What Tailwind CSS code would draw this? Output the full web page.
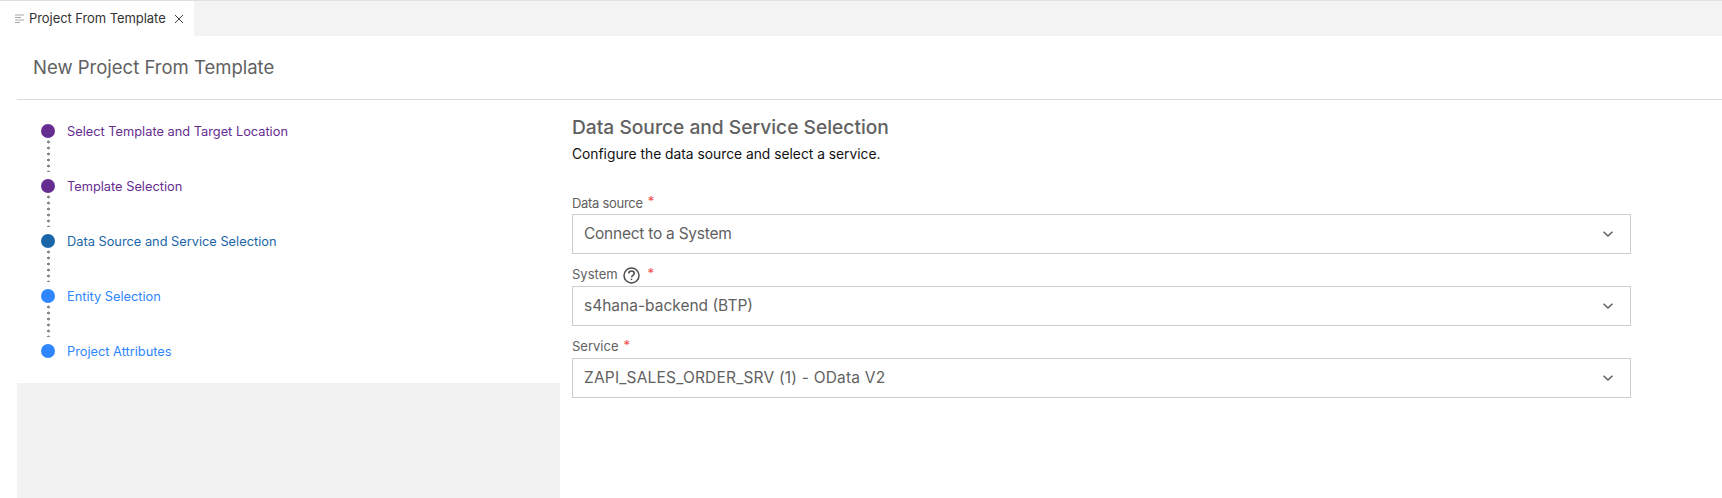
<!DOCTYPE html>
<html lang="en">
<head>
    <meta charset="UTF-8">
    <meta name="viewport" content="width=device-width, initial-scale=1.0">
    <title>Project From Template</title>
    <script src="https://cdn.jsdelivr.net/npm/@tailwindcss/browser@4"></script>
</head>
<body class="bg-white h-[498px] overflow-hidden font-['Inter',sans-serif]">
    <!-- Tab bar -->
    <div class="h-9 bg-[#f3f3f3] border-t border-[#e0e0e0] flex">
        <div class="w-[194px] bg-white flex items-center pl-[15px]">
            <svg class="w-[9px] h-[9px] mr-[5px]" viewBox="0 0 9 9" stroke="#a8a8a8" stroke-width="1" fill="none">
                <path d="M0 1h9M0 3.5h6M0 6h9M0 8.5h5"/>
            </svg>
            <span class="text-[13px] text-[#333333] tracking-[-0.07px]">Project From Template</span>
            <svg class="w-[10px] h-[10px] ml-[8px]" viewBox="0 0 10 10" stroke="#424242" stroke-width="1" fill="none">
                <path d="M1 1l8 8M9 1l-8 8"/>
            </svg>
        </div>
    </div>

    <!-- Page title -->
    <div class="ml-[17px] h-[64px] border-b border-[#dcdcdc] flex items-center pl-4">
        <h1 class="text-[18.5px] text-[#616161]">New Project From Template</h1>
    </div>

    <div class="flex pl-[17px]">
        <!-- Steps -->
        <div class="w-[543px] shrink-0 flex flex-col">
            <div class="h-[283px] pt-[24px] pl-6 flex flex-col">
                <div class="h-[55px] flex">
                    <div class="w-[14px] flex flex-col items-center mr-[12px]">
                        <div class="w-[14px] h-[14px] rounded-full shrink-0 bg-[#662d91]"></div>
                        <div class="w-[3px] h-[33px] mt-[1px] bg-[radial-gradient(circle,#8a8a8a_1.4px,transparent_1.6px)] bg-[length:3px_6px]"></div>
                    </div>
                    <span class="text-[12.8px] leading-[16px] text-[#662d91]">Select Template and Target Location</span>
                </div>
                <div class="h-[55px] flex">
                    <div class="w-[14px] flex flex-col items-center mr-[12px]">
                        <div class="w-[14px] h-[14px] rounded-full shrink-0 bg-[#662d91]"></div>
                        <div class="w-[3px] h-[33px] mt-[1px] bg-[radial-gradient(circle,#8a8a8a_1.4px,transparent_1.6px)] bg-[length:3px_6px]"></div>
                    </div>
                    <span class="text-[12.8px] leading-[16px] text-[#662d91]">Template Selection</span>
                </div>
                <div class="h-[55px] flex">
                    <div class="w-[14px] flex flex-col items-center mr-[12px]">
                        <div class="w-[14px] h-[14px] rounded-full shrink-0 bg-[#1a66a8]"></div>
                        <div class="w-[3px] h-[33px] mt-[1px] bg-[radial-gradient(circle,#8a8a8a_1.4px,transparent_1.6px)] bg-[length:3px_6px]"></div>
                    </div>
                    <span class="text-[12.8px] leading-[16px] text-[#1a66a8]">Data Source and Service Selection</span>
                </div>
                <div class="h-[55px] flex">
                    <div class="w-[14px] flex flex-col items-center mr-[12px]">
                        <div class="w-[14px] h-[14px] rounded-full shrink-0 bg-[#2e86ff]"></div>
                        <div class="w-[3px] h-[33px] mt-[1px] bg-[radial-gradient(circle,#8a8a8a_1.4px,transparent_1.6px)] bg-[length:3px_6px]"></div>
                    </div>
                    <span class="text-[12.8px] leading-[16px] text-[#2e86ff]">Entity Selection</span>
                </div>
                <div class="h-[14px] flex">
                    <div class="w-[14px] flex flex-col items-center mr-[12px]">
                        <div class="w-[14px] h-[14px] rounded-full shrink-0 bg-[#2e86ff]"></div>
                    </div>
                    <span class="text-[12.8px] leading-[16px] text-[#2e86ff]">Project Attributes</span>
                </div>
            </div>
            <div class="h-[115px] bg-[#f2f2f2]"></div>
        </div>

        <!-- Form -->
        <div class="w-[1059px] ml-3 pt-[15px]">
            <h2 class="text-[19.2px] leading-[24px] font-medium text-[#616161]">Data Source and Service Selection</h2>
            <p class="text-[13.8px] leading-[20px] mt-[5px] text-[#111111]">Configure the data source and select a service.</p>

            <div class="mt-[29px] h-[21px] flex items-center text-[13px] text-[#616161]">
                <span class="tracking-[-0.3px]">Data source</span>
                <span class="ml-[5px] text-[#f14c4c] -mt-[3px]">*</span>
            </div>
            <div class="h-10 border-[1.5px] border-[#cecece] flex items-center justify-between pl-[11px] pr-[17px]">
                <span class="text-[15.5px] tracking-[-0.25px] text-[#616161]">Connect to a System</span>
                <svg class="w-[10px] h-[6px]" viewBox="0 0 10 6" stroke="#616161" stroke-width="1.5" fill="none"><path d="M0.5 0.7L5 5l4.5-4.3"/></svg>
            </div>

            <div class="mt-[10px] h-[22px] flex items-center text-[13px] text-[#616161]">
                <span>System</span>
                <svg class="w-[17px] h-[17px] ml-[5px]" viewBox="0 0 17 17" fill="none" stroke="#4d4d4d" stroke-width="1.5">
                    <circle cx="8.5" cy="8.5" r="7.5"/>
                    <path d="M5.8 6.6c0-1.6 1.2-2.5 2.7-2.5s2.7 1 2.7 2.3c0 2-2.7 1.8-2.7 3.9"/>
                    <path d="M8.5 11.6v1.5"/>
                </svg>
                <span class="ml-[8px] text-[#f14c4c] -mt-[3px]">*</span>
            </div>
            <div class="h-10 border-[1.5px] border-[#cecece] flex items-center justify-between pl-[11px] pr-[17px]">
                <span class="text-[15.5px] text-[#616161]">s4hana-backend (BTP)</span>
                <svg class="w-[10px] h-[6px]" viewBox="0 0 10 6" stroke="#616161" stroke-width="1.5" fill="none"><path d="M0.5 0.7L5 5l4.5-4.3"/></svg>
            </div>

            <div class="mt-[10px] h-[22px] flex items-center text-[13px] text-[#616161]">
                <span>Service</span>
                <span class="ml-[5px] text-[#f14c4c] -mt-[3px]">*</span>
            </div>
            <div class="h-10 border-[1.5px] border-[#cecece] flex items-center justify-between pl-[11px] pr-[17px]">
                <span class="text-[15.5px] tracking-[0.2px] text-[#616161]">ZAPI_SALES_ORDER_SRV (1) - OData V2</span>
                <svg class="w-[10px] h-[6px]" viewBox="0 0 10 6" stroke="#616161" stroke-width="1.5" fill="none"><path d="M0.5 0.7L5 5l4.5-4.3"/></svg>
            </div>
        </div>
    </div>
</body>
</html>
